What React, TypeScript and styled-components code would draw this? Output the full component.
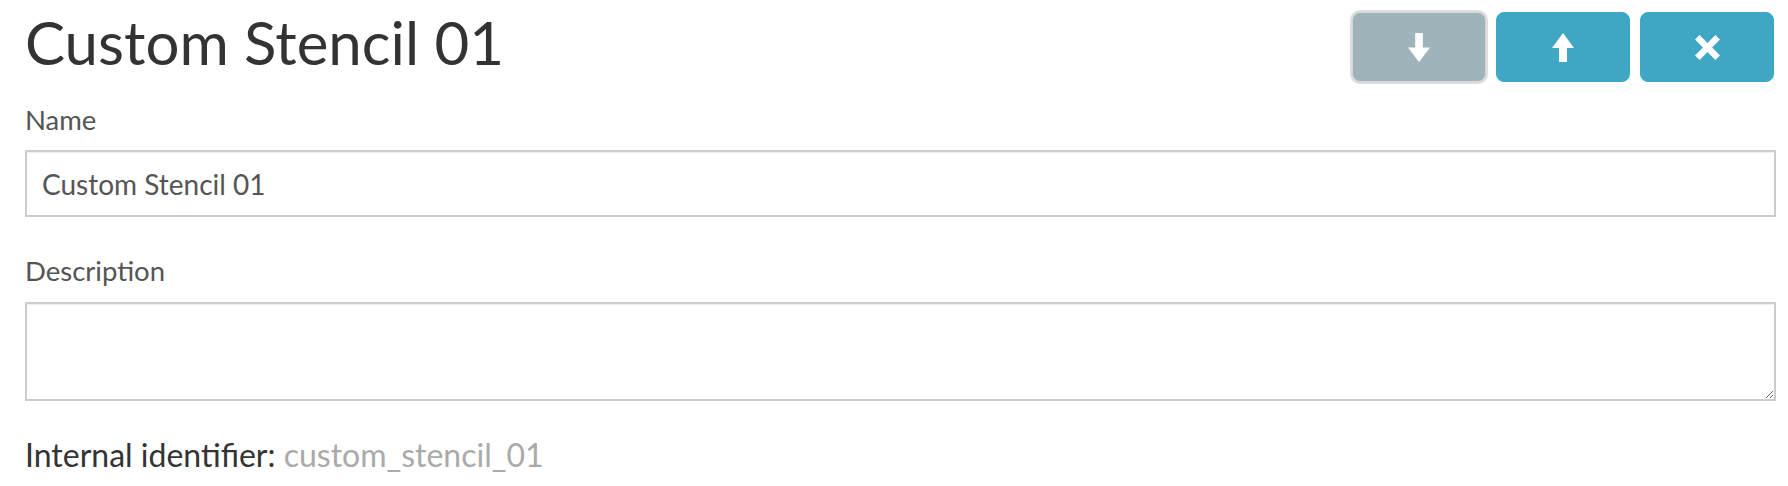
import styled, { createGlobalStyle } from "styled-components";

const GlobalStyle = createGlobalStyle`
  html, body {
    margin: 0;
    padding: 0;
    background: #ffffff;
  }

  body {
    font-family: Lato, "Open Sans", "Liberation Sans", sans-serif;
    color: #333333;
  }
`;

const Page = styled.div`
  padding: 6px 12px 0 25px;
`;

const Header = styled.div`
  display: flex;
  justify-content: space-between;
  align-items: flex-start;
`;

const Title = styled.h1`
  margin: 0;
  font-size: 60px;
  font-weight: 400;
  line-height: 72px;
  color: #333333;
`;

const Actions = styled.div`
  display: flex;
  gap: 10px;
  margin-top: 6px;
  padding-right: 2px;
`;

const ActionButton = styled.button<{ $disabled?: boolean }>`
  display: flex;
  align-items: center;
  justify-content: center;
  width: 134px;
  height: 70px;
  padding: 0;
  border: 1px solid ${(p) => (p.$disabled ? "#d4d8d9" : "#3fa7c3")};
  border-radius: 8px;
  background: ${(p) => (p.$disabled ? "#9fb4ba" : "#3fa7c3")};
  box-shadow: ${(p) => (p.$disabled ? "0 0 0 2px #dedede" : "none")};
  cursor: pointer;

  svg {
    display: block;
    fill: #ffffff;
  }
`;

const Field = styled.div`
  display: flex;
  flex-direction: column;
`;

const Label = styled.label<{ $top: number }>`
  margin-top: ${(p) => p.$top}px;
  font-size: 27.5px;
  line-height: 34px;
  color: #555555;
`;

const TextInput = styled.input`
  box-sizing: border-box;
  width: 100%;
  height: 67px;
  margin: 13px 0 0;
  padding: 0 15px;
  border: 2px solid #cccccc;
  border-radius: 0;
  box-shadow: inset 0 1px 1px rgba(0, 0, 0, 0.075);
  font-family: inherit;
  font-size: 28px;
  color: #555555;
  outline: none;
`;

const TextArea = styled.textarea`
  box-sizing: border-box;
  display: block;
  width: 100%;
  height: 99px;
  margin: 14px 0 0;
  padding: 10px 15px;
  border: 2px solid #cccccc;
  border-radius: 0;
  box-shadow: inset 0 1px 1px rgba(0, 0, 0, 0.075);
  font-family: inherit;
  font-size: 28px;
  color: #555555;
  outline: none;
`;

const Identifier = styled.p`
  margin: 35px 0 0;
  font-size: 32px;
  line-height: 38px;
  color: #333333;

  span {
    color: #aaaaaa;
  }
`;

const ArrowDown = () => (
  <svg width="22" height="29" viewBox="0 0 22 29">
    <path d="M7.2 0 H14.8 V14.5 H22 L11 29 L0 14.5 H7.2 Z" />
  </svg>
);

const ArrowUp = () => (
  <svg width="22" height="29" viewBox="0 0 22 29">
    <path d="M11 0 L22 15 H15 V29 H7 V15 H0 Z" />
  </svg>
);

const Cross = () => (
  <svg width="25" height="25" viewBox="0 0 25 25">
    <path d="M4.6 0 L12.5 7.9 L20.4 0 L25 4.6 L17.1 12.5 L25 20.4 L20.4 25 L12.5 17.1 L4.6 25 L0 20.4 L7.9 12.5 L0 4.6 Z" />
  </svg>
);

const App = () => {
  return (
    <>
      <GlobalStyle />
      <Page>
        <Header>
          <Title>Custom Stencil 01</Title>
          <Actions>
            <ActionButton $disabled aria-label="Download">
              <ArrowDown />
            </ActionButton>
            <ActionButton aria-label="Upload">
              <ArrowUp />
            </ActionButton>
            <ActionButton aria-label="Close">
              <Cross />
            </ActionButton>
          </Actions>
        </Header>

        <Field>
          <Label $top={21}>Name</Label>
          <TextInput defaultValue="Custom Stencil 01" />
        </Field>

        <Field>
          <Label $top={37}>Description</Label>
          <TextArea />
        </Field>

        <Identifier>
          Internal identifier: <span>custom_stencil_01</span>
        </Identifier>
      </Page>
    </>
  );
};

export default App;
